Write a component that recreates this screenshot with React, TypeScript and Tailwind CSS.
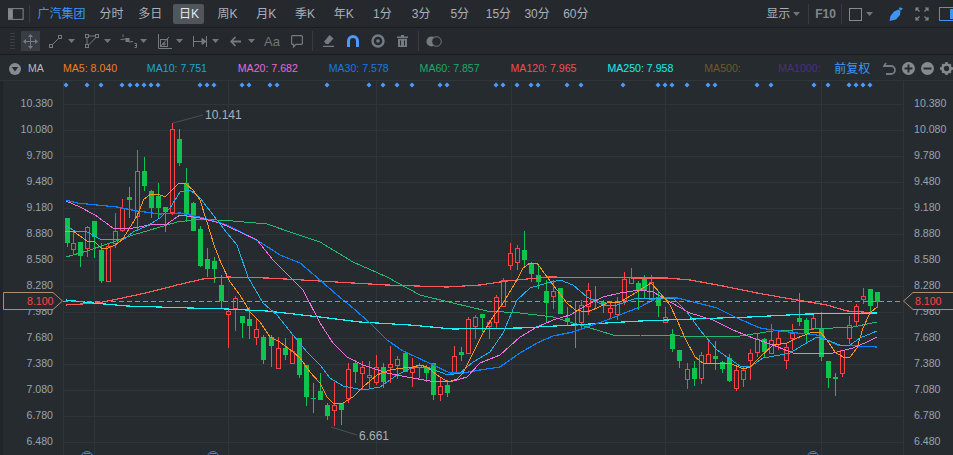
type Candle = [number, number, number, number, number, "r" | "g"];

// x, high, body top, body bottom, low, colour
const candles: Candle[] = [
  [67, 218, 218, 243, 247, "g"], [73, 232, 243, 249, 255, "r"], [80, 242, 242, 256, 267, "g"], [87, 226, 227, 248, 257, "r"],
  [94, 221, 221, 237, 258, "g"], [101, 243, 250, 281, 283, "g"], [108, 244, 246, 281, 282, "r"], [115, 213, 231, 243, 248, "r"],
  [122, 199, 208, 230, 232, "r"], [129, 187, 197, 200, 218, "g"], [137, 150, 171, 216, 230, "r"], [144, 157, 171, 186, 191, "g"],
  [151, 190, 191, 208, 218, "g"], [158, 183, 196, 208, 218, "g"], [165, 207, 207, 212, 232, "g"], [172, 123, 129, 212, 215, "r"],
  [179, 129, 139, 163, 166, "g"], [186, 168, 183, 215, 222, "g"], [193, 202, 203, 231, 231, "g"], [200, 226, 229, 266, 267, "g"],
  [207, 248, 259, 269, 277, "g"], [214, 257, 261, 269, 283, "g"], [221, 275, 285, 301, 308, "g"], [228, 310, 311, 314, 348, "r"],
  [235, 296, 298, 308, 331, "r"], [242, 316, 316, 323, 338, "g"], [249, 307, 319, 326, 339, "g"], [256, 318, 329, 337, 345, "r"],
  [263, 335, 337, 360, 364, "g"], [271, 335, 337, 346, 367, "g"], [278, 337, 348, 368, 368, "r"], [285, 338, 348, 355, 360, "g"],
  [292, 334, 351, 363, 363, "r"], [299, 338, 338, 375, 378, "g"], [306, 365, 365, 397, 406, "g"], [313, 383, 398, 399, 413, "g"],
  [320, 373, 391, 400, 400, "g"], [327, 403, 405, 416, 420, "g"], [334, 382, 405, 410, 426, "r"], [341, 403, 403, 410, 425, "g"],
  [348, 363, 369, 398, 403, "r"], [355, 360, 363, 372, 383, "g"], [362, 361, 367, 373, 390, "r"], [369, 361, 375, 377, 388, "r"],
  [376, 355, 367, 382, 385, "r"], [383, 363, 367, 382, 388, "g"], [390, 346, 364, 367, 383, "r"], [397, 356, 359, 365, 379, "r"],
  [405, 352, 353, 372, 372, "g"], [412, 358, 368, 372, 387, "r"], [419, 363, 365, 367, 378, "r"], [426, 365, 367, 373, 382, "g"],
  [433, 363, 363, 395, 400, "g"], [440, 378, 386, 394, 401, "r"], [447, 380, 385, 393, 397, "g"], [454, 346, 356, 373, 373, "r"],
  [461, 347, 352, 355, 361, "g"], [468, 317, 319, 353, 353, "r"], [475, 315, 317, 326, 339, "r"], [482, 314, 314, 318, 332, "g"],
  [489, 320, 322, 326, 339, "r"], [496, 295, 297, 322, 328, "r"], [503, 278, 280, 306, 306, "r"], [510, 243, 253, 265, 270, "r"],
  [517, 245, 248, 262, 270, "r"], [524, 231, 250, 260, 267, "g"], [531, 262, 263, 274, 282, "g"], [538, 265, 275, 282, 289, "g"],
  [546, 280, 291, 303, 323, "g"], [553, 280, 291, 296, 309, "r"], [560, 288, 288, 314, 314, "g"], [567, 307, 318, 322, 325, "g"],
  [575, 302, 325, 326, 348, "g"], [581, 300, 305, 322, 329, "r"], [588, 283, 290, 306, 315, "r"], [595, 286, 299, 302, 308, "g"],
  [603, 300, 302, 306, 313, "g"], [610, 302, 308, 312, 319, "r"], [617, 297, 302, 314, 320, "r"], [624, 272, 279, 300, 305, "r"],
  [631, 268, 277, 283, 283, "r"], [638, 281, 283, 290, 310, "g"], [644, 275, 279, 290, 298, "g"], [651, 275, 282, 299, 300, "r"],
  [658, 291, 297, 306, 317, "g"], [665, 307, 317, 322, 323, "r"], [672, 329, 334, 349, 352, "g"], [679, 350, 350, 361, 368, "g"],
  [687, 363, 369, 379, 389, "r"], [694, 361, 368, 379, 386, "g"], [701, 352, 355, 378, 384, "r"], [708, 340, 354, 363, 363, "r"],
  [715, 341, 356, 359, 370, "g"], [722, 361, 362, 369, 373, "g"], [729, 354, 358, 381, 382, "g"], [736, 367, 370, 388, 391, "r"],
  [743, 367, 370, 379, 387, "r"], [750, 349, 353, 360, 380, "r"], [757, 334, 339, 352, 357, "r"], [764, 338, 339, 352, 357, "g"],
  [771, 324, 340, 353, 354, "r"], [778, 330, 338, 344, 350, "r"], [786, 344, 347, 360, 369, "r"], [792, 324, 333, 338, 350, "r"],
  [799, 293, 318, 322, 326, "g"], [806, 318, 320, 334, 344, "g"], [813, 314, 318, 328, 330, "r"], [821, 312, 329, 357, 361, "g"],
  [828, 361, 361, 378, 388, "g"], [835, 373, 377, 379, 396, "g"], [842, 350, 350, 373, 377, "r"], [849, 316, 325, 338, 344, "r"],
  [856, 304, 306, 321, 326, "r"], [863, 288, 296, 299, 304, "r"], [870, 289, 289, 306, 312, "g"], [877, 292, 292, 302, 308, "g"],
];

const ma120 = "66,305 97,303 113,300 150,292 177,285 203,279 227,277 267,278 320,281 353,283 387,285 447,287 480,285 507,281 547,277 640,278 667,278 690,280 723,286 757,293 797,300 827,305 847,311 877,313";
const ma250 = "66,300 93,303 127,306 190,308 227,309 267,311 320,317 360,322 410,325 453,329 520,328 573,325 640,321 720,318 750,317 807,314 877,313";
const ma60 = "66,257 87,251 110,243 133,235 157,228 177,222 200,219 233,221 267,224 293,233 320,242 353,262 387,277 420,295 453,303 487,311 520,313 553,317 587,327 613,335 640,335 680,336 740,336 773,331 813,329 853,327 877,322";
const ma30 = "66,200 77,203 97,205 117,207 137,211 160,214 180,213 200,217 227,225 260,242 280,255 300,263 320,280 337,295 353,308 370,323 387,340 403,351 427,362 450,373 463,373 480,370 500,367 520,353 537,343 553,336 573,332 587,327 607,320 627,312 640,307 657,298 677,298 697,303 717,308 737,318 760,328 780,331 797,333 817,335 837,345 857,346 877,347";
const ma20 = "66,201 80,207 95,215 113,228 133,228 150,225 167,224 180,215 200,218 220,223 240,232 257,240 273,260 290,277 303,290 320,323 333,343 347,357 363,365 387,373 407,377 430,381 453,381 467,377 480,363 500,355 520,337 537,327 553,320 570,315 587,305 603,297 620,293 640,290 653,292 670,302 690,313 713,320 733,330 753,338 773,345 793,353 813,353 833,353 853,348 867,342 877,337";
const ma10 = "66,226 75,231 87,232 100,239 117,239 123,240 133,232 147,226 160,218 170,208 180,192 190,190 200,198 217,220 227,233 237,245 248,277 263,303 277,315 293,335 307,352 320,365 330,378 343,386 363,390 380,387 397,375 413,367 427,367 440,372 448,375 460,373 473,362 490,352 503,333 517,300 530,288 547,283 560,280 573,285 587,297 603,305 617,305 637,298 658,298 673,298 687,312 700,330 717,350 740,366 750,367 763,358 780,355 790,353 803,345 817,337 827,340 840,345 850,345 860,338 877,331";
const ma5 = "65,231 73,231 80,236 87,241 94,241 101,248 108,248 115,245 122,240 129,229 137,216 144,199 151,194 158,194 165,197 172,190 179,183 186,184 193,190 200,200 207,222 214,245 221,263 230,282 240,295 250,312 260,322 270,337 280,342 293,352 300,358 310,372 320,383 327,397 334,404 343,403 353,397 363,387 377,375 390,370 403,368 413,367 420,365 427,367 437,375 448,382 457,379 463,373 473,353 483,333 493,317 503,303 517,280 523,268 530,263 537,263 547,277 557,290 567,303 575,310 587,312 597,308 607,303 620,302 637,292 640,290 651,283 660,293 670,305 677,320 685,338 695,357 703,363 717,363 730,363 743,369 750,367 760,357 773,345 787,343 797,338 810,333 820,332 827,340 835,352 843,357 850,357 857,348 863,328 870,313 877,307";

const diamonds = [66, 87, 101, 122, 130, 137, 144, 151, 158, 200, 207, 214, 242, 249, 270, 277, 327, 369, 383, 397, 412, 440, 447, 496, 503, 517, 531, 538, 567, 581, 623, 658, 665, 672, 687, 708, 715, 757, 771, 814, 828, 849, 856, 863, 870];
const prices = ["10.380", "10.080", "9.780", "9.480", "9.180", "8.880", "8.580", "8.280", "7.980", "7.680", "7.380", "7.080", "6.780", "6.480"];
const gridY = [104, 130, 156, 182, 208, 234, 260, 286, 312, 338, 364, 390, 416, 442];
const gridX = [94, 228, 376, 511, 665, 821];
const tabs = ["分时", "多日", "日K", "周K", "月K", "季K", "年K", "1分", "3分", "5分", "15分", "30分", "60分"];

const RED = "#ff4245";
const GREEN = "#0fc351";

function Caret() {
  return (
    <svg viewBox="0 0 7 4" className="w-[7px] h-[4px] shrink-0">
      <path d="M0 0H7L3.5 4Z" fill="#6f767d" />
    </svg>
  );
}

function Chart() {
  return (
    <svg viewBox="63 81 840 374" className="w-[840px] h-[374px] shrink-0 overflow-visible">
      {gridY.map((y) => (
        <line key={y} x1={63} x2={903} y1={y + 0.5} y2={y + 0.5} stroke="#30353a" shapeRendering="crispEdges" />
      ))}
      {[63, ...gridX, 903].map((x) => (
        <line key={x} x1={x + 0.5} x2={x + 0.5} y1={81} y2={455} stroke="#30353a" shapeRendering="crispEdges" />
      ))}
      <g shapeRendering="crispEdges">
        {candles.map(([x, hi, top, bot, lo, c]) => {
          const color = c === "r" ? RED : GREEN;
          return (
            <g key={x}>
              <line x1={x + 0.5} x2={x + 0.5} y1={hi} y2={top} stroke={color} />
              <line x1={x + 0.5} x2={x + 0.5} y1={bot} y2={lo} stroke={color} />
              {c === "g" ? (
                <rect x={x - 2} y={top} width={5} height={Math.max(bot - top, 1)} fill={color} />
              ) : (
                <rect x={x - 1.5} y={top + 0.5} width={4} height={bot - top} fill="none" stroke={color} />
              )}
            </g>
          );
        })}
      </g>
      <g fill="none" shapeRendering="crispEdges">
        <polyline points={ma120} stroke="#ff5a5c" strokeWidth={1.2} />
        <polyline points={ma60} stroke="#25b870" />
        <polyline points={ma250} stroke="#17f2f2" strokeWidth={1.2} />
        <polyline points={ma30} stroke="#0b80ff" strokeWidth={1.2} />
        <polyline points={ma20} stroke="#f26fe0" />
        <polyline points={ma10} stroke="#1fb0ea" />
        <polyline points={ma5} stroke="#ff9420" />
      </g>
      <line x1={63} x2={903} y1={301.5} y2={301.5} stroke="#b08d6c" strokeDasharray="5 3" shapeRendering="crispEdges" />
      {diamonds.map((x) => (
        <path key={x} d={`M${x} 82.5L${x + 2.5} 85L${x} 87.5L${x - 2.5} 85Z`} fill="#4a9bff" />
      ))}
      <line x1={173} y1={123} x2={203} y2={115} stroke="#4a5056" />
      <line x1={331} y1={427} x2={357} y2={435} stroke="#4a5056" />
      {[87, 213, 813].map((x) => (
        <g key={x}>
          <circle cx={x} cy={457} r={5.5} fill="#262b30" stroke="#3f8ae6" />
          <line x1={x - 3} x2={x + 3} y1={453.5} y2={453.5} stroke="#3f8ae6" />
        </g>
      ))}
    </svg>
  );
}

export default function App() {
  return (
    <div className="w-[953px] h-[455px] overflow-hidden flex flex-col bg-[#262b30] font-['Liberation_Sans','Noto_Sans_CJK_SC',sans-serif] text-[#a9b0b8]">
      {/* top tabs */}
      <div className="h-[28px] shrink-0 flex items-center pt-px border-b border-[#1a1d20] bg-[#25292e] text-[12px]">
        <svg viewBox="0 0 16 12" className="ml-[8px] w-[16px] h-[12px]">
          <rect x="0.5" y="0.5" width="15" height="11" fill="none" stroke="#858b91" />
          <rect x="1" y="1" width="4" height="10" fill="#858b91" />
        </svg>
        <div className="ml-[5px] w-px h-[18px] bg-[#373c41]" />
        <span className="ml-[8px] w-[48px] text-[#3f94f6] whitespace-nowrap">广汽集团</span>
        <div className="ml-[10.5px] flex items-center gap-[7.7px]">
          {tabs.map((t) => (
            <span
              key={t}
              className={
                t === "日K"
                  ? "w-[31px] h-[20px] flex items-center justify-center rounded-[2px] bg-[#50565c] text-[#e6e8ea] whitespace-nowrap"
                  : "w-[31px] h-[20px] flex items-center justify-center whitespace-nowrap"
              }
            >
              {t}
            </span>
          ))}
        </div>
        <span className="ml-[175px] w-[24px] whitespace-nowrap">显示</span>
        <div className="ml-[3px]"><Caret /></div>
        <div className="ml-[8px] w-px h-[20px] bg-[#373c41]" />
        <span className="ml-[6px] w-[20px] font-bold text-[#7f868c] whitespace-nowrap">F10</span>
        <div className="ml-[6px] w-px h-[20px] bg-[#373c41]" />
        <div className="ml-[7px] w-[13px] h-[13px] border border-[#858b91]" />
        <div className="ml-[4px]"><Caret /></div>
        <svg viewBox="0 0 14 14" className="ml-[16px] w-[14px] h-[14px] shrink-0" fill="#3f94f6">
          <path d="M9.5 2.5L11.5 4L11 8L7 12.5L0.5 14L1.5 9L5 4.5Z" />
          <path d="M10.5 0.2L13.8 1.2L12.2 3.6L10 2.2Z" />
        </svg>
        <svg viewBox="0 0 14 14" className="ml-[12px] w-[14px] h-[14px] shrink-0" fill="none" stroke="#7f868c" strokeWidth="1.2">
          <path d="M1 4V1H4M1 1L4.5 4.5M10 1H13V4M13 1L9.5 4.5M1 10V13H4M1 13L4.5 9.5M13 10V13H10M13 13L9.5 9.5" />
        </svg>
        <svg viewBox="0 0 14 14" className="ml-[10px] w-[14px] h-[14px] shrink-0 overflow-hidden">
          <rect x="0.5" y="0.5" width="16" height="13" fill="none" stroke="#3f94f6" />
          <rect x="11" y="2" width="3" height="10" fill="#3f94f6" />
        </svg>
      </div>

      {/* drawing tools */}
      <div className="h-[27px] shrink-0 flex items-center border-b border-[#1a1d20] bg-[#25292e]">
        <div className="ml-[10px] w-[5px] h-[17px] flex flex-col justify-between">
          {[0, 1, 2, 3, 4, 5].map((i) => (
            <div key={i} className="h-px bg-[#3c4146]" />
          ))}
        </div>
        <div className="ml-[6px] w-[19px] h-[20px] flex items-center justify-center bg-[#383d43]">
          <svg viewBox="0 0 15 15" className="w-[15px] h-[15px]" fill="#747b82">
            <path d="M7 3H8V12H7ZM3 7H12V8H3Z" />
            <path d="M7.5 0L10 3H5ZM7.5 15L5 12H10ZM0 7.5L3 5V10ZM15 7.5L12 10V5Z" />
          </svg>
        </div>
        <svg viewBox="0 0 13 13" className="ml-[9px] w-[13px] h-[13px]" fill="none" stroke="#747b82">
          <rect x="0.5" y="9.5" width="3" height="3" />
          <rect x="9.5" y="0.5" width="3" height="3" />
          <path d="M3.5 9.5L9.5 3.5" />
        </svg>
        <div className="ml-[6px]"><Caret /></div>
        <svg viewBox="0 0 14 14" className="ml-[10px] w-[14px] h-[14px]" fill="none" stroke="#747b82">
          <rect x="0.5" y="0.5" width="3" height="3" />
          <rect x="10.5" y="0.5" width="3" height="3" />
          <rect x="0.5" y="10.5" width="3" height="3" />
          <path d="M3.5 2H10.5M2 3.5V10.5M3.5 11L11 3.5" />
        </svg>
        <div className="ml-[5px]"><Caret /></div>
        <svg viewBox="0 0 17 14" className="ml-[9px] w-[17px] h-[14px]" fill="none" stroke="#747b82">
          <path d="M0.5 5.5L6 5L9 8L13 7.5M3 0.5V3M14.5 9.5H16.5V13.5H14.5M16.5 11.5H15" />
          <rect x="6" y="4.5" width="3" height="3" fill="#747b82" />
        </svg>
        <div className="ml-[3px]"><Caret /></div>
        <svg viewBox="0 0 15 15" className="ml-[10px] w-[15px] h-[15px]" fill="none" stroke="#747b82">
          <path d="M1.5 0V14.5H15" />
          <rect x="3.5" y="5.5" width="7" height="7" />
          <path d="M3.5 12.5L12 3M6 9H8V11H6Z" />
        </svg>
        <div className="ml-[4px]"><Caret /></div>
        <svg viewBox="0 0 14 11" className="ml-[10px] w-[14px] h-[11px]" fill="none" stroke="#747b82">
          <path d="M0.5 0V11M13.5 0V11M1 5.5H12" />
          <path d="M13 5.5L9 2.5V8.5Z" fill="#747b82" />
        </svg>
        <div className="ml-[5px]"><Caret /></div>
        <svg viewBox="0 0 11 11" className="ml-[11px] w-[11px] h-[11px]" fill="none" stroke="#747b82" strokeWidth="1.8">
          <path d="M11 5.5H1.5M5.5 1L1.2 5.5L5.5 10" />
        </svg>
        <div className="ml-[7px]"><Caret /></div>
        <span className="ml-[9px] w-[15px] text-[13px] leading-none text-[#6f767d] whitespace-nowrap">Aa</span>
        <svg viewBox="0 0 12 13" className="ml-[12px] w-[12px] h-[13px]" fill="none" stroke="#747b82" strokeWidth="1.2">
          <path d="M1.5 0.6H10.5A1 1 0 0 1 11.4 1.6V8.4A1 1 0 0 1 10.5 9.4H5L2.5 12V9.4H1.5A1 1 0 0 1 0.6 8.4V1.6A1 1 0 0 1 1.5 0.6Z" />
        </svg>
        <div className="ml-[9px] w-px h-[20px] bg-[#373c41]" />
        <svg viewBox="0 0 11 12" className="ml-[10px] w-[11px] h-[12px]" fill="#747b82">
          <path d="M6.5 0L10.5 3.5L5.5 9H3L1 6.8ZM0 10.8H11V12H0Z" />
        </svg>
        <svg viewBox="0 0 12 12" className="ml-[13px] w-[12px] h-[12px]" fill="none">
          <path d="M1.5 12V6A4.5 4.5 0 0 1 10.5 6V12" stroke="#4a9bff" strokeWidth="3" />
          <path d="M0 9.5H3V12H0ZM9 9.5H12V12H9Z" fill="#4a9bff" />
        </svg>
        <svg viewBox="0 0 14 14" className="ml-[12px] w-[14px] h-[14px]" fill="none">
          <circle cx="7" cy="7" r="5.5" stroke="#747b82" strokeWidth="2.4" />
          <circle cx="7" cy="7" r="1.8" fill="#747b82" />
        </svg>
        <svg viewBox="0 0 11 12" className="ml-[12px] w-[11px] h-[12px]" fill="#747b82">
          <path d="M4 0H7V1.5H11V3H0V1.5H4ZM1 3.8H10V12H1ZM3 5.5V10.5H4V5.5ZM7 5.5V10.5H8V5.5Z" fillRule="evenodd" />
        </svg>
        <div className="ml-[10px] w-px h-[20px] bg-[#373c41]" />
        <svg viewBox="0 0 16 11" className="ml-[7px] w-[16px] h-[11px]">
          <circle cx="5.5" cy="5.5" r="5" fill="#747b82" />
          <circle cx="10.5" cy="5.5" r="4.8" fill="#25292e" stroke="#747b82" />
        </svg>
      </div>

      {/* moving average legend */}
      <div className="h-[26px] shrink-0 flex items-center pt-[2px] text-[10.6px] border-b border-[#30353a]">
        <svg viewBox="0 0 12 12" className="ml-[9px] w-[12px] h-[12px]">
          <circle cx="6" cy="6" r="6" fill="#858b91" />
          <path d="M2.8 4H9.2L6 8.6Z" fill="#262b30" />
        </svg>
        <span className="ml-[7px] w-[35px] text-[#b4bac0]">MA</span>
        <span className="w-[84px] text-[#f07d1e] whitespace-nowrap">MA5: 8.040</span>
        <span className="w-[91px] text-[#1ba5d8] whitespace-nowrap">MA10: 7.751</span>
        <span className="w-[91px] text-[#e868d8] whitespace-nowrap">MA20: 7.682</span>
        <span className="w-[91px] text-[#1378ea] whitespace-nowrap">MA30: 7.578</span>
        <span className="w-[91px] text-[#1fa868] whitespace-nowrap">MA60: 7.857</span>
        <span className="w-[97px] text-[#f05050] whitespace-nowrap">MA120: 7.965</span>
        <span className="w-[97px] text-[#12f0e8] whitespace-nowrap">MA250: 7.958</span>
        <span className="w-[74px] text-[#6d5a2a] whitespace-nowrap">MA500:</span>
        <span className="w-[56px] text-[#4a2f7f] whitespace-nowrap">MA1000:</span>
        <span className="w-[49px] text-[12px] text-[#3f94f6] whitespace-nowrap">前复权</span>
        <svg viewBox="0 0 13 13" className="w-[13px] h-[13px]" fill="none" stroke="#747b82" strokeWidth="1.8">
          <path d="M3 1L1 4H8A4 4 0 0 1 8 12H3" />
        </svg>
        <svg viewBox="0 0 13 13" className="ml-[6px] w-[13px] h-[13px]">
          <circle cx="6.5" cy="6.5" r="6.5" fill="#858b91" />
          <path d="M5.5 2.5H7.5V5.5H10.5V7.5H7.5V10.5H5.5V7.5H2.5V5.5H5.5Z" fill="#262b30" />
        </svg>
        <svg viewBox="0 0 13 13" className="ml-[6px] w-[13px] h-[13px]">
          <circle cx="6.5" cy="6.5" r="6.5" fill="#858b91" />
          <path d="M2.5 5.5H10.5V7.5H2.5Z" fill="#262b30" />
        </svg>
        <svg viewBox="0 0 13 13" className="ml-[6px] w-[13px] h-[13px] shrink-0">
          <circle cx="6.5" cy="6.5" r="4" fill="none" stroke="#858b91" strokeWidth="2.6" />
          <path d="M5.3 0H7.7V2H5.3ZM5.3 11H7.7V13H5.3ZM0 5.3H2V7.7H0ZM11 5.3H13V7.7H11ZM1.5 3L3 1.5L4 2.8L2.8 4ZM10 1.5L11.5 3L10.2 4L9 2.8ZM1.5 10L2.8 9L4 10.2L3 11.5ZM10.2 9L11.5 10L10 11.5L9 10.2Z" fill="#858b91" />
        </svg>
      </div>

      {/* chart with price axes */}
      <div className="relative flex-1 flex text-[10.6px] text-[#98a3ad]">
        <div className="w-[63px] shrink-0 pt-[9px] pr-[10px] flex flex-col items-end border-l-[3px] border-[#212428]">
          {prices.map((p) => (
            <span key={p} className="h-[26px] leading-[26px]">{p}</span>
          ))}
        </div>
        <Chart />
        <div className="w-[50px] shrink-0 pt-[9px] pl-[11px] flex flex-col">
          {prices.map((p) => (
            <span key={p} className="h-[26px] leading-[26px]">{p}</span>
          ))}
        </div>

        {/* extreme labels and last price tags sit over the chart */}
        <span className="absolute left-[205px] top-[26px] text-[12px] leading-[16px] text-[#a9b0b8]">10.141</span>
        <span className="absolute left-[359px] top-[347px] text-[12px] leading-[16px] text-[#a9b0b8]">6.661</span>
        <div className="absolute left-[3px] top-[211px] w-[60px] h-[18px]">
          <svg viewBox="0 0 60 18" className="absolute inset-0 w-[60px] h-[18px]">
            <path d="M0.5 0.5H50L59.5 9L50 17.5H0.5Z" fill="#262b30" stroke="#b08d6c" />
          </svg>
          <span className="absolute left-[24px] top-0 leading-[18px] text-[#ff4245]">8.100</span>
        </div>
        <div className="absolute right-0 top-[211px] w-[50px] h-[18px]">
          <svg viewBox="0 0 50 18" className="absolute inset-0 w-[50px] h-[18px]">
            <path d="M51 0.5H10L0.5 9L10 17.5H51" fill="#262b30" stroke="#b08d6c" />
          </svg>
          <span className="absolute left-[12px] top-0 leading-[18px] text-[#ff4245]">8.100</span>
        </div>
      </div>
    </div>
  );
}
